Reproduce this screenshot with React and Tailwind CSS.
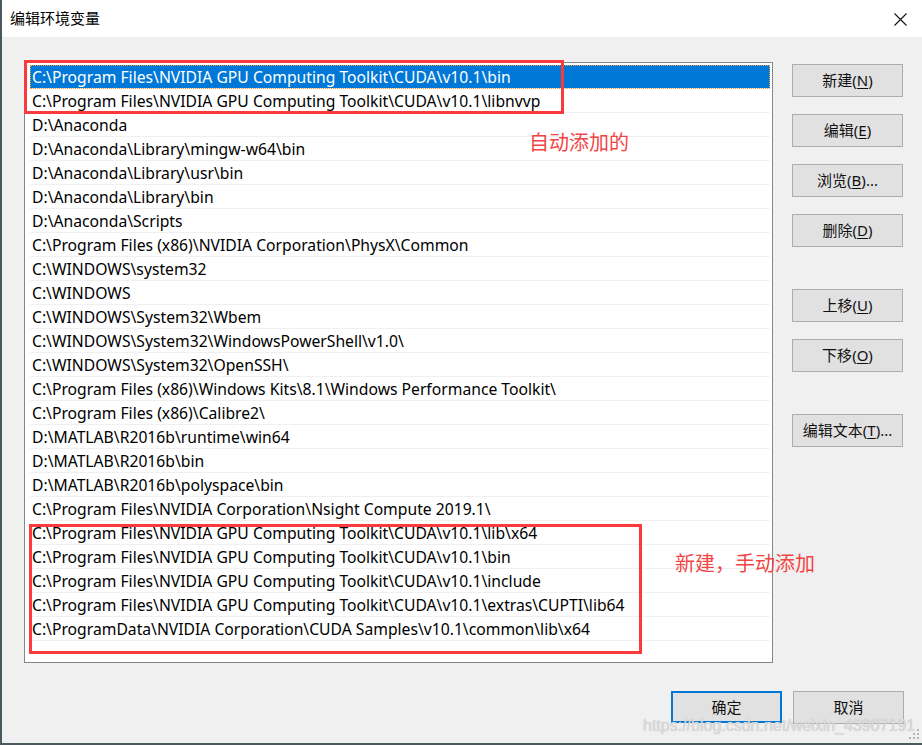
import React from 'react';

const paths = [
  'C:\\Program Files\\NVIDIA GPU Computing Toolkit\\CUDA\\v10.1\\bin',
  'C:\\Program Files\\NVIDIA GPU Computing Toolkit\\CUDA\\v10.1\\libnvvp',
  'D:\\Anaconda',
  'D:\\Anaconda\\Library\\mingw-w64\\bin',
  'D:\\Anaconda\\Library\\usr\\bin',
  'D:\\Anaconda\\Library\\bin',
  'D:\\Anaconda\\Scripts',
  'C:\\Program Files (x86)\\NVIDIA Corporation\\PhysX\\Common',
  'C:\\WINDOWS\\system32',
  'C:\\WINDOWS',
  'C:\\WINDOWS\\System32\\Wbem',
  'C:\\WINDOWS\\System32\\WindowsPowerShell\\v1.0\\',
  'C:\\WINDOWS\\System32\\OpenSSH\\',
  'C:\\Program Files (x86)\\Windows Kits\\8.1\\Windows Performance Toolkit\\',
  'C:\\Program Files (x86)\\Calibre2\\',
  'D:\\MATLAB\\R2016b\\runtime\\win64',
  'D:\\MATLAB\\R2016b\\bin',
  'D:\\MATLAB\\R2016b\\polyspace\\bin',
  'C:\\Program Files\\NVIDIA Corporation\\Nsight Compute 2019.1\\',
  'C:\\Program Files\\NVIDIA GPU Computing Toolkit\\CUDA\\v10.1\\lib\\x64',
  'C:\\Program Files\\NVIDIA GPU Computing Toolkit\\CUDA\\v10.1\\bin',
  'C:\\Program Files\\NVIDIA GPU Computing Toolkit\\CUDA\\v10.1\\include',
  'C:\\Program Files\\NVIDIA GPU Computing Toolkit\\CUDA\\v10.1\\extras\\CUPTI\\lib64',
  'C:\\ProgramData\\NVIDIA Corporation\\CUDA Samples\\v10.1\\common\\lib\\x64',
  '',
];

// side buttons: label, mnemonic, trailing text, top margin
const sideButtons = [
  { label: '新建', key: 'N', tail: '', mt: 'mt-0' },
  { label: '编辑', key: 'E', tail: '', mt: 'mt-[17px]' },
  { label: '浏览', key: 'B', tail: '...', mt: 'mt-[17px]' },
  { label: '删除', key: 'D', tail: '', mt: 'mt-[17px]' },
  { label: '上移', key: 'U', tail: '', mt: 'mt-[42px]' },
  { label: '下移', key: 'O', tail: '', mt: 'mt-[17px]' },
  { label: '编辑文本', key: 'T', tail: '...', mt: 'mt-[42px]' },
];

const font = 'font-["Noto_Sans","Noto_Sans_CJK_SC",sans-serif]';

function WinButton({ children, primary, className = '' }) {
  return (
    <div
      className={`flex w-[111px] items-center justify-center bg-[#e1e1e1] text-[15px] text-[#111] ${
        primary ? 'h-[32px] border-2 border-[#0078d7]' : 'h-[33px] border border-[#adadad]'
      } ${className}`}
    >
      {children}
    </div>
  );
}

export default function App() {
  return (
    <div className={`relative flex h-[745px] w-[922px] flex-col overflow-hidden border-b-2 border-l-2 border-[#4b585e] bg-[#f0f0f0] ${font}`}>
      {/* title bar */}
      <div className="flex h-[37px] shrink-0 items-center justify-between bg-white pl-[8px] pr-[15px]">
        <span className="text-[15px] text-black">编辑环境变量</span>
        <svg width="13" height="13" viewBox="0 0 13 13" className="mt-[2px]">
          <path d="M0.5 0.5L12.5 12.5M12.5 0.5L0.5 12.5" stroke="#111" strokeWidth="1.1" />
        </svg>
      </div>

      {/* body */}
      <div className="flex pl-[22px] pt-[25px]">
        <div className="h-[601px] w-[749px] border border-[#828790] bg-white pl-[5px] pr-[2px] pt-[2px]">
          {paths.map((p, i) => (
            <div
              key={i}
              className={`h-[24px] whitespace-nowrap border-b border-[#f0f0f0] pl-[2px] pt-[1px] text-[15.7px] leading-[22px] ${
                i === 0
                  ? 'bg-[#0078d7] text-white outline-1 -outline-offset-1 outline-dotted outline-[#f0a040]'
                  : 'text-black'
              }`}
            >
              {p}
            </div>
          ))}
        </div>

        <div className="ml-[19px] mt-[2px] flex flex-col">
          {sideButtons.map((b) => (
            <WinButton key={b.label} className={b.mt}>
              {b.label}(<span className="underline underline-offset-2">{b.key}</span>){b.tail}
            </WinButton>
          ))}
        </div>
      </div>

      {/* bottom buttons */}
      <div className="mt-[28px] flex justify-end gap-[11px] pr-[18px]">
        <WinButton primary>确定</WinButton>
        <WinButton>取消</WinButton>
      </div>

      {/* annotations */}
      <div className="absolute left-[22px] top-[60px] h-[54px] w-[540px] border-[3px] border-[#fb3b3b]" />
      <div className="absolute left-[27px] top-[524px] h-[130px] w-[613px] border-[3px] border-[#fb3b3b]" />
      <div className="absolute left-[527px] top-[128px] text-[20px] text-[#f24545]">自动添加的</div>
      <div className="absolute left-[673px] top-[549px] text-[20px] text-[#f24545]">新建，手动添加</div>

      {/* watermark */}
      <div className='absolute left-[641px] top-[714px] whitespace-nowrap font-["Liberation_Sans",sans-serif] text-[16px] text-[#dcdcdc] [text-shadow:0_0_1px_#b5b5b5]'>
        https://blog.csdn.net/weixin_43907191
      </div>

      {/* resize grip */}
      <svg width="12" height="12" viewBox="0 0 12 12" className="absolute bottom-[2px] right-[2px]">
        {[[9, 0], [9, 4], [5, 4], [9, 8], [5, 8], [1, 8]].map(([x, y], i) => (
          <rect key={i} x={x} y={y} width="2" height="2" fill="#b5b5b5" />
        ))}
      </svg>
    </div>
  );
}
